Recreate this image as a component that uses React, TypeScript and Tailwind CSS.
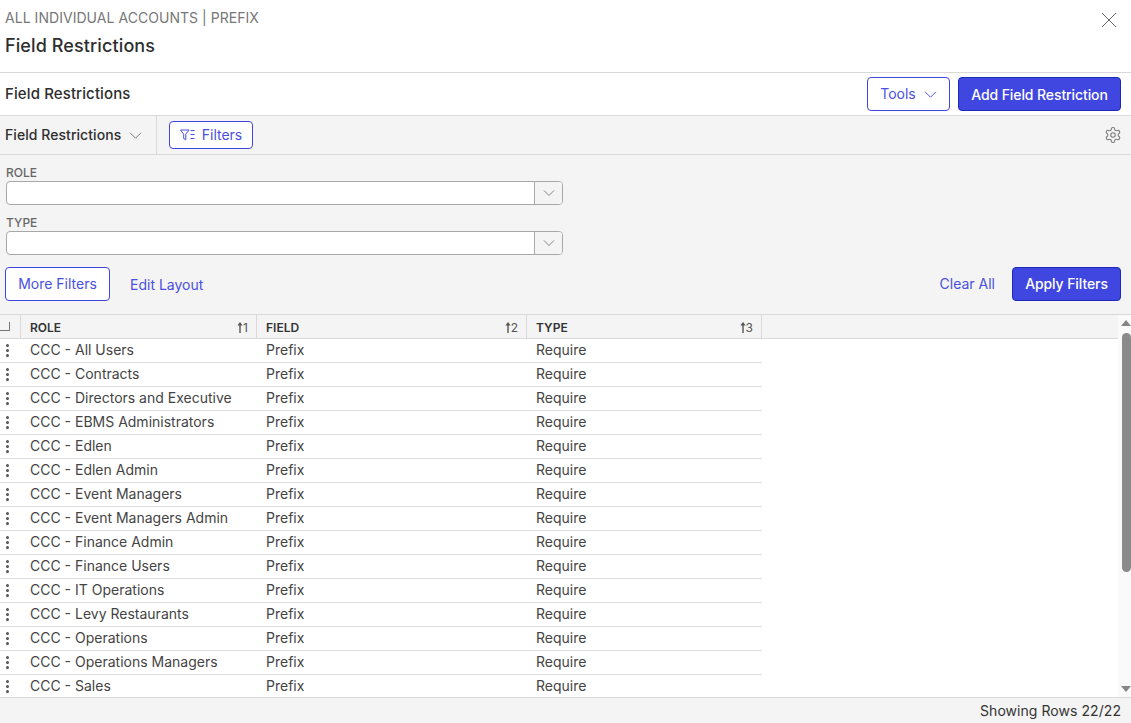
import React from "react";

const roles = [
  "CCC - All Users",
  "CCC - Contracts",
  "CCC - Directors and Executive",
  "CCC - EBMS Administrators",
  "CCC - Edlen",
  "CCC - Edlen Admin",
  "CCC - Event Managers",
  "CCC - Event Managers Admin",
  "CCC - Finance Admin",
  "CCC - Finance Users",
  "CCC - IT Operations",
  "CCC - Levy Restaurants",
  "CCC - Operations",
  "CCC - Operations Managers",
  "CCC - Sales",
];

function Chevron({ className = "", size = 12 }: { className?: string; size?: number }) {
  return (
    <svg width={size} height={size} viewBox="0 0 12 12" fill="none" stroke="currentColor" strokeWidth="0.9" className={className}>
      <path d="M1 3.5 L6 8.5 L11 3.5" />
    </svg>
  );
}

function SortMark({ n }: { n: number }) {
  return (
    <span className="flex items-center text-[12px] text-[#555] font-normal">
      <svg width="6" height="11" viewBox="0 0 6 11" fill="#555">
        <path d="M3 0 L5.6 3.4 L3.7 3.4 L3.7 11 L2.3 11 L2.3 3.4 L0.4 3.4 Z" />
      </svg>
      <span>{n}</span>
    </span>
  );
}

function Select({ label }: { label: string }) {
  return (
    <div className="flex flex-col w-[557px] ml-[6px]">
      <div className="text-[12px] leading-[14px] h-[15px] text-[#666] font-medium">{label}</div>
      <div className="flex h-[24px] bg-white border border-[#a8a8a8] rounded-[4px] overflow-hidden">
        <div className="flex-1 border-r border-[#a8a8a8]" />
        <div className="w-[27px] flex items-center justify-center bg-[#f4f4f4] text-[#777]">
          <Chevron />
        </div>
      </div>
    </div>
  );
}

function OutlineButton({ children, className = "" }: { children: React.ReactNode; className?: string }) {
  return (
    <button className={`flex items-center justify-center border border-[#3f46e0] rounded-[4px] bg-white text-[#4a50e0] text-[14px] pb-[2px] ${className}`}>
      {children}
    </button>
  );
}

function SolidButton({ children, className = "" }: { children: React.ReactNode; className?: string }) {
  return (
    <button className={`flex items-center justify-center border border-[#1c28b8] rounded-[4px] bg-[#4046e0] text-white text-[14px] font-medium tracking-[-0.007em] ${className}`}>
      {children}
    </button>
  );
}

export default function App() {
  return (
    <div className="w-[1131px] h-[723px] bg-white flex flex-col overflow-hidden font-['Inter',sans-serif] text-[14px] text-[#333]">
      <header className="h-[73px] shrink-0 border-b border-[#d9d9d9] flex justify-between pl-[5px] pr-[14px]">
        <div className="flex flex-col">
          <div className="text-[14px] leading-[18px] mt-[9px] text-[#777] tracking-[0.003em]">ALL INDIVIDUAL ACCOUNTS | PREFIX</div>
          <div className="text-[18px] leading-[24px] mt-[7px] font-medium text-[#2e2e2e] tracking-[0.006em]">Field Restrictions</div>
        </div>
        <svg width="16" height="16" viewBox="0 0 16 16" fill="none" stroke="#666" strokeWidth="1" className="mt-[12px]">
          <path d="M1 1 L15 15 M15 1 L1 15" />
        </svg>
      </header>

      <div className="h-[43px] shrink-0 border-b border-[#d9d9d9] flex items-center justify-between pl-[5px] pr-[10px]">
        <div className="text-[15px] font-medium text-[#2e2e2e] tracking-[0.0075em]">Field Restrictions</div>
        <div className="flex items-center gap-2">
          <OutlineButton className="w-[83px] h-[34px] gap-[8px]">
            Tools <Chevron size={13} className="mt-[2px]" />
          </OutlineButton>
          <SolidButton className="w-[163px] h-[34px]">Add Field Restriction</SolidButton>
        </div>
      </div>

      <div className="h-[39px] shrink-0 bg-[#f4f4f4] border-b border-[#d9d9d9] flex items-center pr-[10px]">
        <div className="w-[157px] h-full border-r border-[#d9d9d9] flex items-center pl-[5px] gap-[8px]">
          <span className="text-[14px] font-medium text-[#2e2e2e] tracking-[0.004em] mb-[1px]">Field Restrictions</span>
          <Chevron size={13} className="text-[#777]" />
        </div>
        <OutlineButton className="ml-[12px] w-[84px] h-[28px] gap-[7px]">
          <svg width="15" height="12" viewBox="0 0 15 12" fill="none" stroke="#4a50e0" strokeWidth="1" className="mt-[2px]">
            <path d="M0.5 1 H9 L5.8 5.2 V10.8 L3.7 9.6 V5.2 Z" />
            <path d="M10.5 1.5 H14.5 M10.5 5.5 H14.5 M10.5 9.5 H14.5" />
          </svg>
          Filters
        </OutlineButton>
        <svg width="18" height="18" viewBox="0 0 24 24" fill="none" stroke="#777" strokeWidth="1.4" strokeLinecap="round" strokeLinejoin="round" className="ml-auto mr-[-1px]">
          <path d="M12.22 2h-.44a2 2 0 0 0-2 2v.18a2 2 0 0 1-1 1.73l-.43.25a2 2 0 0 1-2 0l-.15-.08a2 2 0 0 0-2.73.73l-.22.38a2 2 0 0 0 .73 2.73l.15.1a2 2 0 0 1 1 1.72v.51a2 2 0 0 1-1 1.74l-.15.09a2 2 0 0 0-.73 2.73l.22.38a2 2 0 0 0 2.73.73l.15-.08a2 2 0 0 1 2 0l.43.25a2 2 0 0 1 1 1.73V20a2 2 0 0 0 2 2h.44a2 2 0 0 0 2-2v-.18a2 2 0 0 1 1-1.73l.43-.25a2 2 0 0 1 2 0l.15.08a2 2 0 0 0 2.73-.73l.22-.39a2 2 0 0 0-.73-2.73l-.15-.08a2 2 0 0 1-1-1.74v-.5a2 2 0 0 1 1-1.74l.15-.09a2 2 0 0 0 .73-2.73l-.22-.38a2 2 0 0 0-2.73-.73l-.15.08a2 2 0 0 1-2 0l-.43-.25a2 2 0 0 1-1-1.73V4a2 2 0 0 0-2-2z" />
          <circle cx="12" cy="12" r="3" />
        </svg>
      </div>

      <div className="h-[160px] shrink-0 bg-[#f4f4f4] border-b border-[#d9d9d9] flex flex-col pt-[11px]">
        <Select label="ROLE" />
        <div className="h-[11px]" />
        <Select label="TYPE" />
        <div className="flex items-center justify-between pl-[5px] pr-[10px] mt-[12px]">
          <div className="flex items-center">
            <OutlineButton className="w-[105px] h-[34px]">More Filters</OutlineButton>
            <span className="ml-[20px] mt-[1px] text-[#4a50e0]">Edit Layout</span>
          </div>
          <div className="flex items-center">
            <span className="text-[#4a50e0] mb-[1px]">Clear All</span>
            <SolidButton className="ml-[17px] w-[109px] h-[34px] pb-[2px]">Apply Filters</SolidButton>
          </div>
        </div>
      </div>

      <div className="h-[383px] shrink-0 flex overflow-hidden">
        <div className="flex-1 flex flex-col overflow-hidden">
          <div className="h-[24px] shrink-0 bg-[#f4f4f4] border-b border-[#d9d9d9] flex text-[12px] font-semibold text-[#333]">
            <div className="w-[21px] shrink-0 border-r border-[#d9d9d9] flex items-center">
              <div className="w-[10px] h-[9px] mb-[1px] border-r border-b border-[#777]" />
            </div>
            <div className="w-[236px] shrink-0 border-r border-[#d9d9d9] flex items-center justify-between pl-[9px] pr-[8px] pt-[2px]">
              ROLE <SortMark n={1} />
            </div>
            <div className="w-[270px] shrink-0 border-r border-[#d9d9d9] flex items-center justify-between pl-[9px] pr-[8px] pt-[2px]">
              FIELD <SortMark n={2} />
            </div>
            <div className="w-[235px] shrink-0 border-r border-[#d9d9d9] flex items-center justify-between pl-[9px] pr-[8px] pt-[2px]">
              TYPE <SortMark n={3} />
            </div>
          </div>
          <div className="h-[359px] shrink-0 border-b border-[#d9d9d9]">
            <div className="h-[358px] overflow-hidden text-[14px] text-[#444]">
              {roles.map((r) => (
                <div key={r} className="h-[24px] w-[762px] flex">
                  <div className="w-[21px] shrink-0 border-b border-[#dedede] flex items-center">
                    <div className="ml-[6px] flex flex-col gap-[2px]">
                      <span className="w-[3px] h-[3px] rounded-full bg-[#555]" />
                      <span className="w-[3px] h-[3px] rounded-full bg-[#555]" />
                      <span className="w-[3px] h-[3px] rounded-full bg-[#555]" />
                    </div>
                  </div>
                  <div className="w-[236px] shrink-0 border-b border-[#dedede] pl-[9px] leading-[21px]">{r}</div>
                  <div className="w-[270px] shrink-0 border-b border-[#dedede] pl-[9px] leading-[21px]">Prefix</div>
                  <div className="w-[235px] shrink-0 border-b border-[#dedede] pl-[9px] leading-[21px]">Require</div>
                </div>
              ))}
            </div>
          </div>
        </div>
        <div className="w-[13px] shrink-0 h-[383px] flex flex-col items-end bg-[#fafafa] border-b border-[#d9d9d9]">
          <div className="h-[382px] w-full flex flex-col items-center pl-[3px]">
            <svg width="10" height="6" viewBox="0 0 10 6" fill="#858585" className="mt-[5px]">
              <path d="M5 0 L10 6 H0 Z" />
            </svg>
            <div className="w-[9px] h-[239px] mt-[7px] rounded-[5px] bg-[#8a8a8a]" />
            <svg width="10" height="6" viewBox="0 0 10 6" fill="#858585" className="mt-auto mb-[5px]">
              <path d="M5 6 L10 0 H0 Z" />
            </svg>
          </div>
        </div>
      </div>

      <div className="h-[25px] shrink-0 bg-[#f4f4f4] flex items-center justify-end pr-[10px] text-[14px] text-[#333] tracking-[0.004em]">
        Showing Rows 22/22
      </div>
    </div>
  );
}
